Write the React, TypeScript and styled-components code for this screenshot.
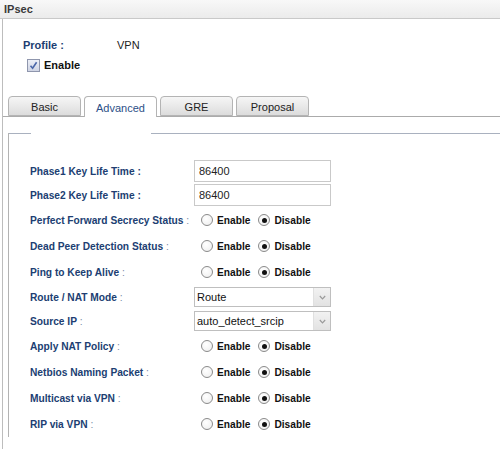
import React from "react";
import styled, { createGlobalStyle } from "styled-components";

const Global = createGlobalStyle`
  html, body { margin: 0; padding: 0; background: #ffffff; }
  body { font-family: "Liberation Sans", Arial, sans-serif; font-size: 11px; color: #222; }
`;

const Page = styled.div`
  width: 500px;
  height: 449px;
  overflow: hidden;
  background: #fff;
`;

const Header = styled.div`
  height: 18px;
  border-bottom: 1px solid #c9c9c9;
  background: linear-gradient(#f8f8f8, #ebebeb);
  display: flex;
  align-items: center;
  padding-left: 4px;
  font-weight: bold;
  font-size: 11px;
  color: #3a3a3a;
`;

const Panel = styled.div`
  margin-left: 2px;
  border-left: 1px solid #bdbdbd;
  padding-top: 19px;
  height: 430px;
  box-sizing: border-box;
`;

const ProfileRow = styled.div`
  display: flex;
  align-items: center;
  height: 14px;
  padding-left: 20px;
`;

const ProfileLabel = styled.span`
  width: 94px;
  font-weight: bold;
  color: #203e72;
  font-size: 11px;
`;

const ProfileValue = styled.span`
  font-size: 11px;
  color: #222;
`;

const EnableRow = styled.label`
  display: flex;
  align-items: center;
  gap: 4px;
  height: 14px;
  margin-top: 6px;
  padding-left: 24px;
  font-weight: bold;
  font-size: 11px;
  color: #111;
`;

const CheckBox = styled.span`
  width: 11px;
  height: 11px;
  border: 1px solid #8f96ad;
  background: linear-gradient(#eceff7, #cfd4e4);
  display: flex;
  align-items: center;
  justify-content: center;
`;

const TabStrip = styled.div`
  margin-top: 24px;
  height: 20px;
  border-bottom: 1px solid #ababab;
  display: flex;
  gap: 3px;
  padding-left: 5px;
`;

const Tab = styled.div<{ $active?: boolean }>`
  width: 73px;
  height: ${(p) => (p.$active ? "21px" : "20px")};
  box-sizing: border-box;
  border: 1px solid #b4b4b4;
  border-bottom: ${(p) => (p.$active ? "none" : "1px solid #b4b4b4")};
  border-radius: 4px 4px 0 0;
  background: ${(p) => (p.$active ? "#ffffff" : "linear-gradient(#f6f6f6, #dcdcdc)")};
  color: ${(p) => (p.$active ? "#2c4f87" : "#222")};
  display: flex;
  align-items: center;
  justify-content: center;
  font-size: 11px;
  padding-top: 1px;
  position: relative;
  z-index: 1;
`;

const Frame = styled.div`
  margin-top: 16px;
  margin-left: 5px;
  border-left: 1px solid #b3b3b3;
`;

const FrameTop = styled.div`
  display: flex;
  height: 1px;
`;

const TopSeg = styled.div<{ $w?: number }>`
  background: #a9b1bf;
  height: 1px;
  width: ${(p) => (p.$w ? `${p.$w}px` : "auto")};
  flex: ${(p) => (p.$w ? "none" : "1")};
`;

const TopGap = styled.div`
  width: 120px;
`;

const Form = styled.div`
  padding-top: 25px;
  padding-left: 21px;
  display: flex;
  flex-direction: column;
`;

const Row = styled.div<{ $h: number }>`
  display: flex;
  align-items: center;
  height: ${(p) => p.$h}px;
`;

const Label = styled.div`
  width: 164px;
  font-weight: bold;
  font-size: 10.2px;
  color: #203e72;
  white-space: nowrap;
`;

const Colon = styled.span<{ $light?: boolean }>`
  font-weight: ${(p) => (p.$light ? "normal" : "bold")};
  color: ${(p) => (p.$light ? "#7a8aa6" : "#203e72")};
`;

const TextInput = styled.div`
  width: 137px;
  height: 22px;
  box-sizing: border-box;
  border: 1px solid #c9c9c9;
  display: flex;
  align-items: center;
  padding-left: 4px;
  font-size: 11px;
  color: #222;
`;

const Select = styled.div`
  width: 137px;
  height: 20px;
  box-sizing: border-box;
  border: 1px solid #bfbfbf;
  display: flex;
  align-items: stretch;
  font-size: 11px;
  color: #111;
`;

const SelectText = styled.div`
  flex: 1;
  display: flex;
  align-items: center;
  padding-left: 2px;
`;

const SelectArrow = styled.div`
  width: 16px;
  background: linear-gradient(#f2f2f2, #e2e2e2);
  border-left: 1px solid #e0e0e0;
  display: flex;
  align-items: center;
  justify-content: center;
`;

const RadioGroup = styled.div`
  display: flex;
  align-items: center;
  padding-left: 7px;
`;

const RadioItem = styled.label`
  display: flex;
  align-items: center;
  gap: 4px;
  font-weight: bold;
  font-size: 10.2px;
  color: #111;
  margin-right: 8px;
`;

const RadioCircle = styled.span<{ $on?: boolean }>`
  width: 12px;
  height: 12px;
  box-sizing: border-box;
  border-radius: 50%;
  border: 1px solid #8a8a8a;
  background: radial-gradient(circle at 40% 35%, #ffffff, #ececec);
  display: flex;
  align-items: center;
  justify-content: center;
  &::after {
    content: "";
    display: ${(p) => (p.$on ? "block" : "none")};
    width: 5px;
    height: 5px;
    border-radius: 50%;
    background: #111;
  }
`;

const Check = () => (
  <svg width="9" height="9" viewBox="0 0 9 9">
    <path d="M1.5 4.8 L3.6 7.2 L7.6 1.2" stroke="#4a66a8" strokeWidth="1.6" fill="none" />
  </svg>
);

const Chevron = () => (
  <svg width="7" height="5" viewBox="0 0 7 5">
    <path d="M0.8 1 L3.5 3.8 L6.2 1" stroke="#9a9a9a" strokeWidth="1.2" fill="none" />
  </svg>
);

type Field =
  | { kind: "text"; label: string; value: string; h: number }
  | { kind: "select"; label: string; value: string; h: number }
  | { kind: "radio"; label: string; h: number };

const fields: Field[] = [
  { kind: "text", label: "Phase1 Key Life Time", value: "86400", h: 24 },
  { kind: "text", label: "Phase2 Key Life Time", value: "86400", h: 24 },
  { kind: "radio", label: "Perfect Forward Secrecy Status", h: 26 },
  { kind: "radio", label: "Dead Peer Detection Status", h: 26 },
  { kind: "radio", label: "Ping to Keep Alive", h: 26 },
  { kind: "select", label: "Route / NAT Mode", value: "Route", h: 24 },
  { kind: "select", label: "Source IP", value: "auto_detect_srcip", h: 24 },
  { kind: "radio", label: "Apply NAT Policy", h: 26 },
  { kind: "radio", label: "Netbios Naming Packet", h: 26 },
  { kind: "radio", label: "Multicast via VPN", h: 26 },
  { kind: "radio", label: "RIP via VPN", h: 26 },
];

const tabs = ["Basic", "Advanced", "GRE", "Proposal"];

export default function App() {
  return (
    <Page>
      <Global />
      <Header>IPsec</Header>
      <Panel>
        <ProfileRow>
          <ProfileLabel>Profile :</ProfileLabel>
          <ProfileValue>VPN</ProfileValue>
        </ProfileRow>
        <EnableRow>
          <CheckBox>
            <Check />
          </CheckBox>
          Enable
        </EnableRow>
        <TabStrip>
          {tabs.map((t) => (
            <Tab key={t} $active={t === "Advanced"}>
              {t}
            </Tab>
          ))}
        </TabStrip>
        <Frame>
          <FrameTop>
            <TopSeg $w={22} />
            <TopGap />
            <TopSeg />
          </FrameTop>
          <Form>
            {fields.map((f) => (
              <Row key={f.label} $h={f.h}>
                <Label>
                  {f.label} <Colon $light={f.kind !== "text"}>:</Colon>
                </Label>
                {f.kind === "text" && <TextInput>{f.value}</TextInput>}
                {f.kind === "select" && (
                  <Select>
                    <SelectText>{f.value}</SelectText>
                    <SelectArrow>
                      <Chevron />
                    </SelectArrow>
                  </Select>
                )}
                {f.kind === "radio" && (
                  <RadioGroup>
                    <RadioItem>
                      <RadioCircle />
                      Enable
                    </RadioItem>
                    <RadioItem>
                      <RadioCircle $on />
                      Disable
                    </RadioItem>
                  </RadioGroup>
                )}
              </Row>
            ))}
          </Form>
        </Frame>
      </Panel>
    </Page>
  );
}
